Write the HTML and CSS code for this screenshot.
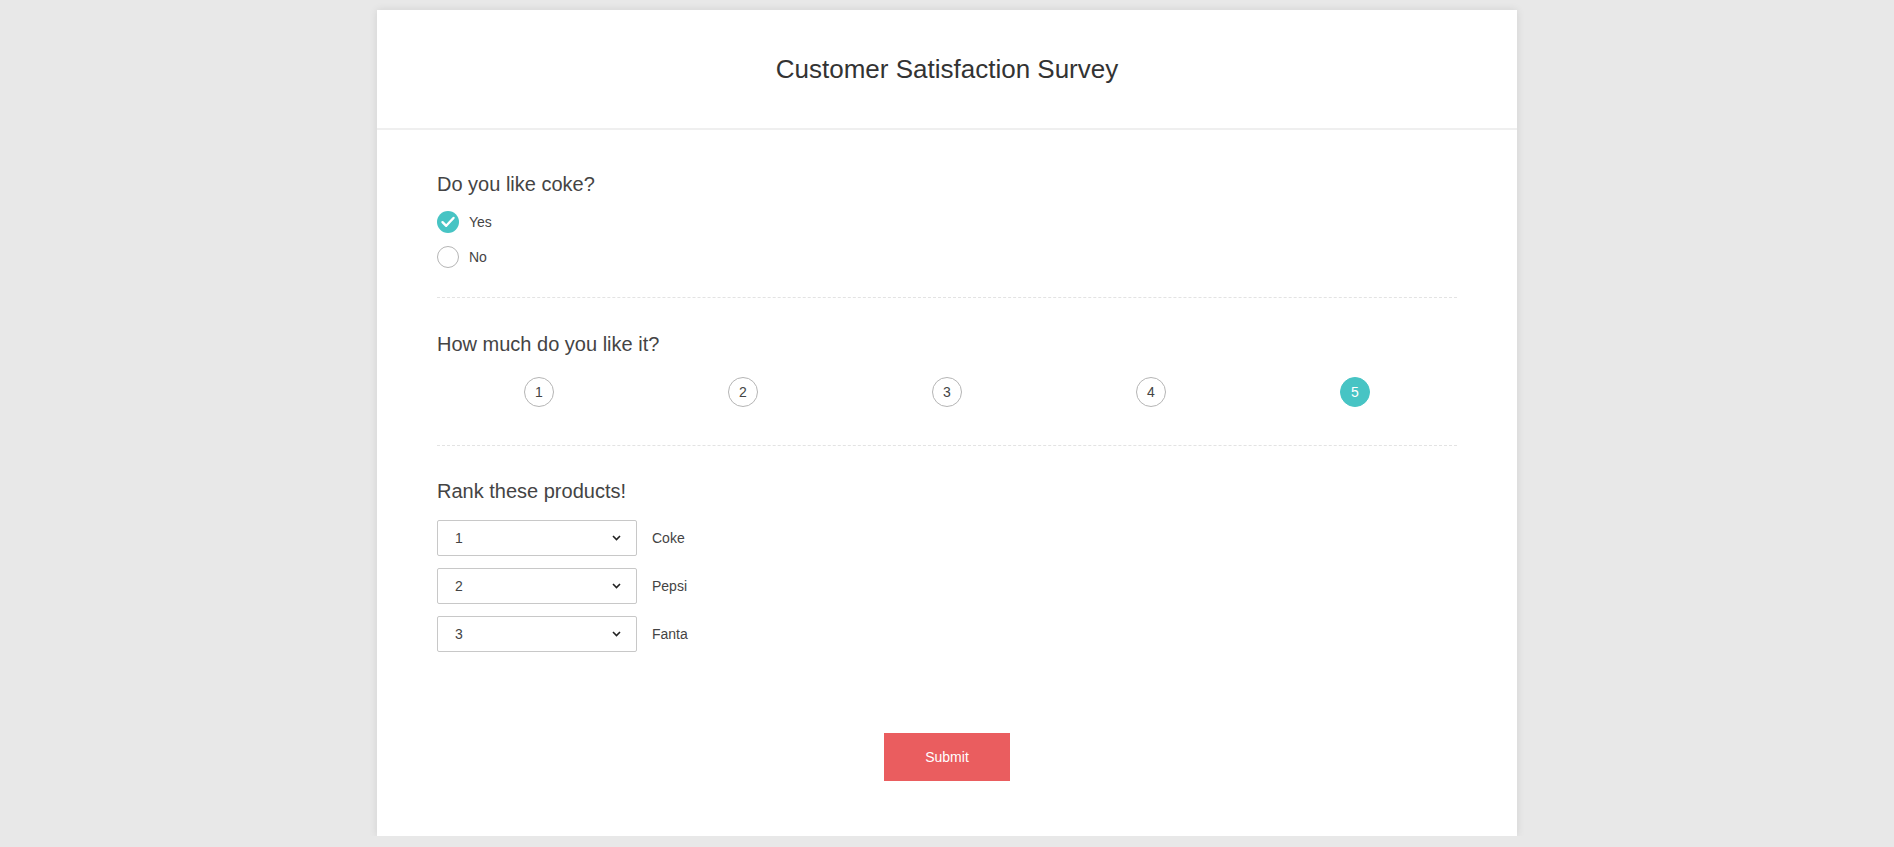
FILE: index.html
```html
<!DOCTYPE html>
<html lang="en">
<head>
<meta charset="utf-8">
<title>Customer Satisfaction Survey</title>
<link rel="stylesheet" href="styles.css">
</head>
<body>
<div class="card">
  <header class="card-header">
    <h1 class="survey-title">Customer Satisfaction Survey</h1>
  </header>
  <main class="card-body">
    <section class="question q-radio">
      <h2 class="q-title">Do you like coke?</h2>
      <div class="radio-list">
        <label class="radio-item">
          <svg class="radio-icon" width="22" height="22" viewBox="0 0 22 22"><circle cx="11" cy="11" r="11" fill="#47c4c4"/><polyline points="5.5,11.2 9.2,14.8 16.5,7" fill="none" stroke="#fff" stroke-width="2.4" stroke-linecap="round" stroke-linejoin="round"/></svg>
          <span class="radio-label">Yes</span>
        </label>
        <label class="radio-item">
          <svg class="radio-icon" width="22" height="22" viewBox="0 0 22 22"><circle cx="11" cy="11" r="10.5" fill="#fff" stroke="#b5b5b5" stroke-width="1"/></svg>
          <span class="radio-label">No</span>
        </label>
      </div>
    </section>
    <section class="question q-rating">
      <h2 class="q-title">How much do you like it?</h2>
      <div class="rating-row">
        <div class="rating-cell"><span class="rating-item">1</span></div>
        <div class="rating-cell"><span class="rating-item">2</span></div>
        <div class="rating-cell"><span class="rating-item">3</span></div>
        <div class="rating-cell"><span class="rating-item">4</span></div>
        <div class="rating-cell"><span class="rating-item is-selected">5</span></div>
      </div>
    </section>
    <section class="question q-rank">
      <h2 class="q-title">Rank these products!</h2>
      <div class="rank-list">
        <div class="rank-row">
          <div class="select-wrap">
            <select class="rank-select"><option>1</option><option>2</option><option>3</option></select>
            <svg class="chevron" width="9" height="6" viewBox="0 0 9 6"><polyline points="1,1 4.5,4.5 8,1" fill="none" stroke="#222" stroke-width="1.6"/></svg>
          </div>
          <span class="rank-label">Coke</span>
        </div>
        <div class="rank-row">
          <div class="select-wrap">
            <select class="rank-select"><option>2</option><option>1</option><option>3</option></select>
            <svg class="chevron" width="9" height="6" viewBox="0 0 9 6"><polyline points="1,1 4.5,4.5 8,1" fill="none" stroke="#222" stroke-width="1.6"/></svg>
          </div>
          <span class="rank-label">Pepsi</span>
        </div>
        <div class="rank-row">
          <div class="select-wrap">
            <select class="rank-select"><option>3</option><option>1</option><option>2</option></select>
            <svg class="chevron" width="9" height="6" viewBox="0 0 9 6"><polyline points="1,1 4.5,4.5 8,1" fill="none" stroke="#222" stroke-width="1.6"/></svg>
          </div>
          <span class="rank-label">Fanta</span>
        </div>
      </div>
    </section>
  </main>
  <footer class="actions">
    <button class="submit-btn" type="button">Submit</button>
  </footer>
</div>
</body>
</html>
```

FILE: styles.css
```css
html, body {
  margin: 0;
  padding: 0;
}
body {
  background: #e8e8e8;
  font-family: "Liberation Sans", Arial, sans-serif;
  color: #404040;
  padding-top: 10px;
}
.card {
  width: 1140px;
  margin: 0 auto;
  background: #fff;
  box-shadow: 0 0 8px rgba(0, 0, 0, 0.1);
}
.card-header {
  height: 118px;
  display: flex;
  align-items: center;
  justify-content: center;
  border-bottom: 2px solid #efefef;
}
.survey-title {
  margin: 0;
  font-size: 26px;
  font-weight: normal;
  color: #333;
  line-height: 30px;
}
.card-body {
  padding: 0 60px;
}
.question {
  border-bottom: 1px dashed #e3e3e3;
}
.question:last-child {
  border-bottom: none;
}
.q-title {
  margin: 0;
  font-size: 20px;
  font-weight: normal;
  line-height: 24px;
  color: #444;
}
.q-radio {
  padding: 42px 0 29px;
}
.q-radio .q-title {
  margin-bottom: 15px;
}
.radio-list {
  display: flex;
  flex-direction: column;
  gap: 13px;
}
.radio-item {
  display: flex;
  align-items: center;
  gap: 10px;
  height: 22px;
}
.radio-icon {
  display: block;
  flex: none;
}
.radio-label {
  font-size: 14px;
  color: #444;
}
.q-rating {
  padding: 34px 0 38px;
}
.q-rating .q-title {
  margin-bottom: 21px;
}
.rating-row {
  display: grid;
  grid-template-columns: repeat(5, 1fr);
}
.rating-cell {
  display: flex;
  justify-content: center;
}
.rating-item {
  box-sizing: border-box;
  width: 30px;
  height: 30px;
  border-radius: 50%;
  border: 1px solid #b5b5b5;
  display: flex;
  align-items: center;
  justify-content: center;
  font-size: 14px;
  color: #444;
}
.rating-item.is-selected {
  background: #47c4c4;
  border-color: #47c4c4;
  color: #fff;
}
.q-rank {
  padding: 33px 0 0;
}
.q-rank .q-title {
  margin-bottom: 17px;
}
.rank-list {
  display: flex;
  flex-direction: column;
  gap: 12px;
}
.rank-row {
  display: flex;
  align-items: center;
  gap: 15px;
}
.select-wrap {
  position: relative;
  width: 200px;
  height: 36px;
}
.rank-select {
  appearance: none;
  -webkit-appearance: none;
  box-sizing: border-box;
  width: 200px;
  height: 36px;
  margin: 0;
  padding: 0 0 0 17px;
  border: 1px solid #c8c8c8;
  border-radius: 2px;
  background: #fff;
  font-family: "Liberation Sans", Arial, sans-serif;
  font-size: 14px;
  color: #444;
  outline: none;
}
.chevron {
  position: absolute;
  right: 16px;
  top: 15px;
  pointer-events: none;
}
.rank-label {
  font-size: 14px;
  color: #444;
}
.actions {
  display: flex;
  justify-content: center;
  padding: 81px 0 55px;
}
.submit-btn {
  width: 126px;
  height: 48px;
  border: none;
  border-radius: 0;
  background: #ea5d5f;
  color: #fff;
  font-family: "Liberation Sans", Arial, sans-serif;
  font-size: 14px;
  cursor: pointer;
}
```
